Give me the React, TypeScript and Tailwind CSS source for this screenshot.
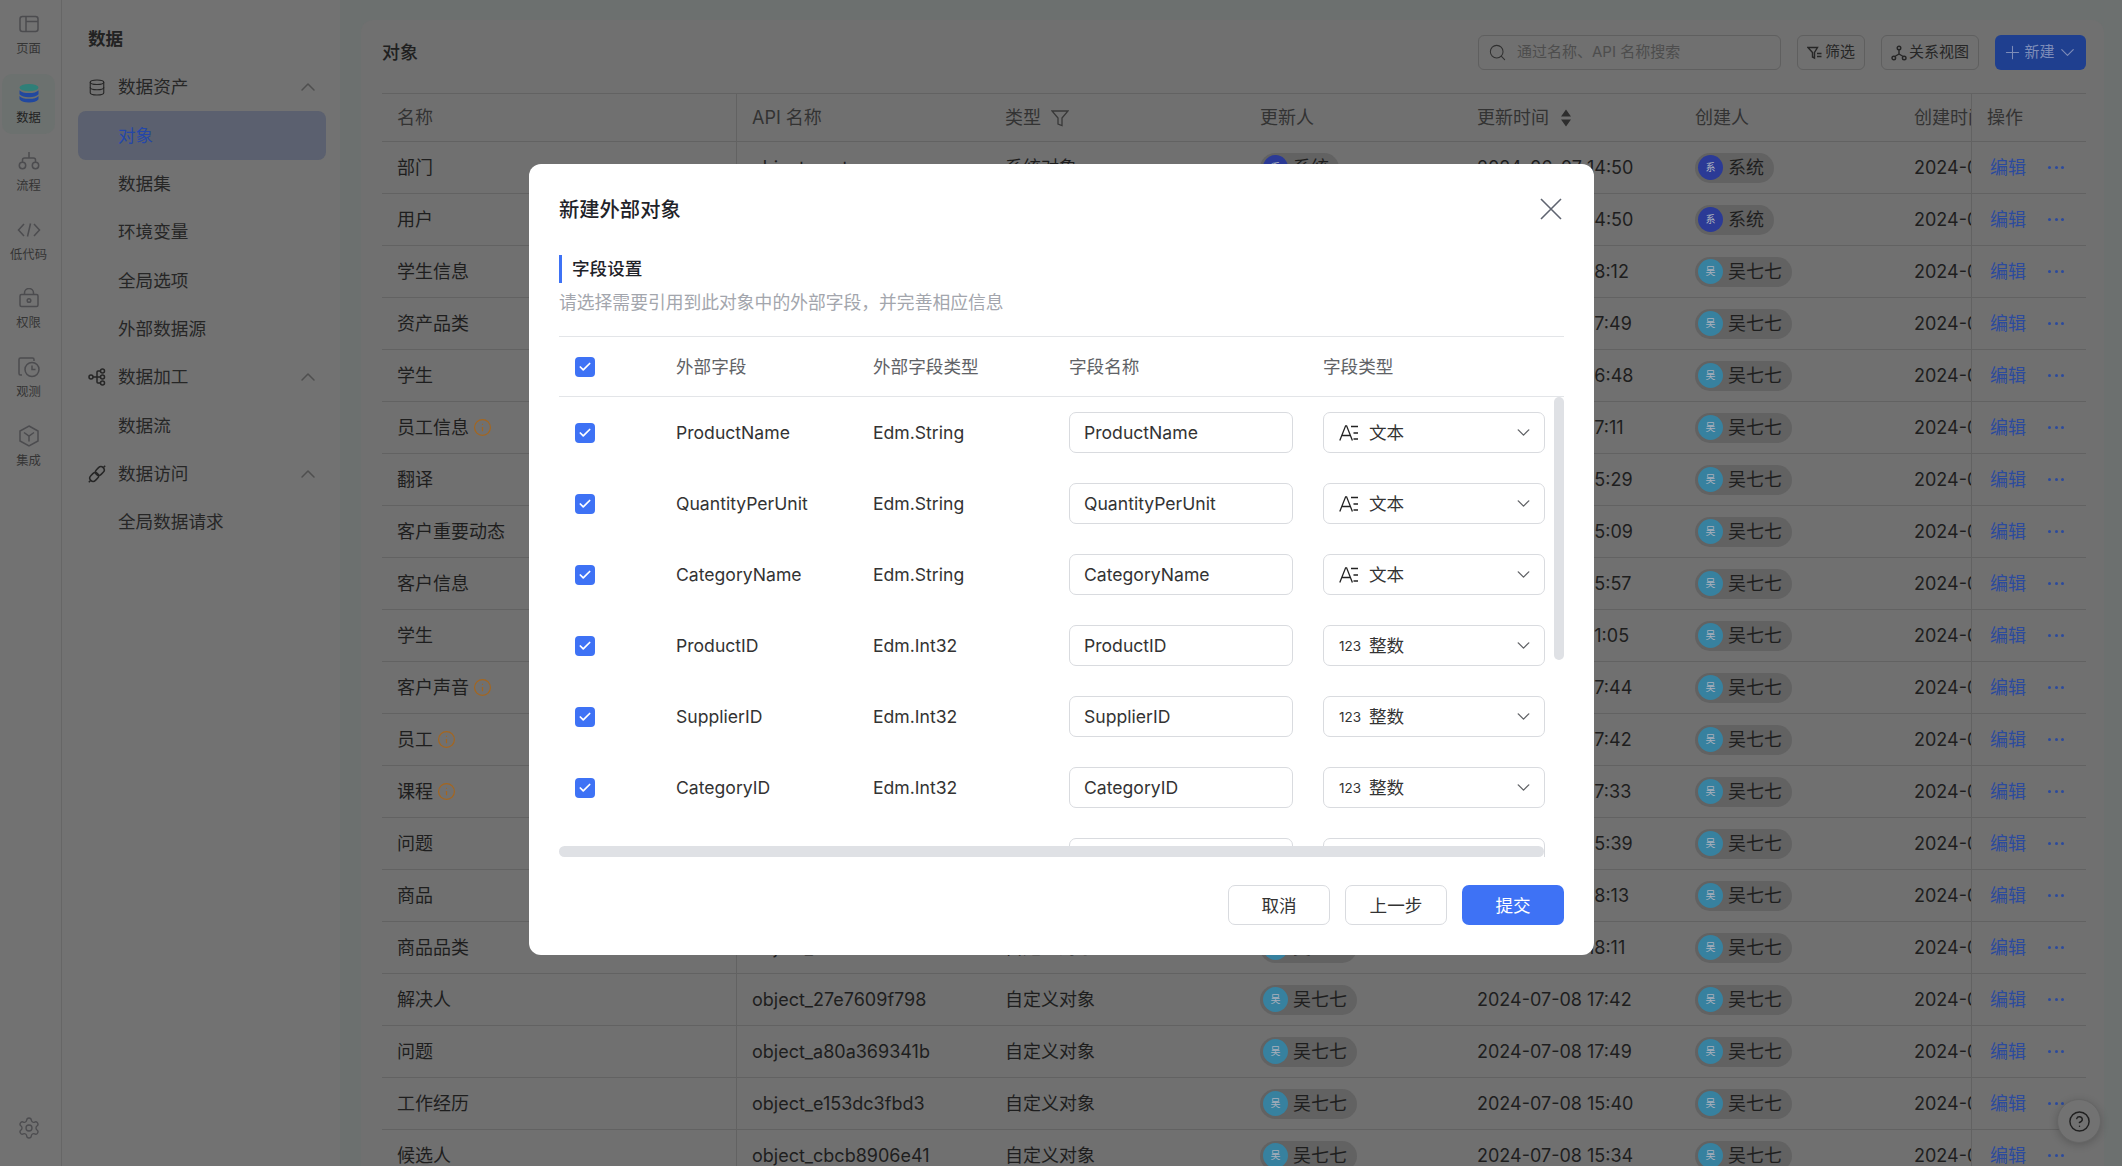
import React from "react";
import { ChevronDown, ChevronUp, Plus, Search, Settings, CircleHelp, Info, Check, Database } from "lucide-react";

const FONT = "font-['Inter','Noto_Sans_CJK_SC',sans-serif]";

function PageIcon() {
  return (
    <svg width="20" height="20" viewBox="0 0 20 20" fill="none" stroke="#4c4c4f" strokeWidth="1.5">
      <rect x="1" y="2.5" width="18" height="15" rx="2.5" />
      <path d="M7 2.5v15M7 7.5h12" />
    </svg>
  );
}
function DataIcon() {
  return (
    <svg width="20" height="20" viewBox="0 0 20 20">
      <ellipse cx="10" cy="4.6" rx="9.5" ry="3.6" fill="#2f7f78" />
      <path d="M.5 7.2c1.6 2 5 2.8 9.5 2.8s7.900-.8 9.500-2.800v4c-1.600 2-5 3-9.500 3s-7.900-1-9.500-3z" fill="#21489f" />
      <path d="M.5 13c1.600 2 5 2.800 9.500 2.800s7.900-.8 9.500-2.800v3.200c-1.600 2.200-5 3.300-9.500 3.300s-7.900-1.100-9.500-3.300z" fill="#21489f" />
    </svg>
  );
}
function FlowIcon() {
  return (
    <svg width="22" height="20" viewBox="0 0 22 20" fill="none" stroke="#4c4c4f" strokeWidth="1.500">
      <circle cx="4.500" cy="14.500" r="3.200" />
      <circle cx="17.500" cy="14.500" r="3.200" />
      <path d="M11 1v6M4.500 11.300V9a2 2 0 0 1 2-2h9a2 2 0 0 1 2 2v2.300" />
    </svg>
  );
}
function CodeIcon() {
  return (
    <svg width="24" height="18" viewBox="0 0 24 18" fill="none" stroke="#4c4c4f" strokeWidth="1.500">
      <path d="M7 3 1.500 9 7 15M17 3l5.500 6L17 15M13.500 2.500l-3 13" />
    </svg>
  );
}
function LockIcon() {
  return (
    <svg width="20" height="20" viewBox="0 0 20 20" fill="none" stroke="#4c4c4f" strokeWidth="1.500">
      <rect x="1" y="6.500" width="18" height="12" rx="1.500" />
      <path d="M5.500 6.500V5a4.500 4.500 0 0 1 9 0v1.500" />
      <circle cx="10" cy="12.500" r="1.800" />
    </svg>
  );
}
function WatchIcon() {
  return (
    <svg width="22" height="22" viewBox="0 0 22 22" fill="none" stroke="#4c4c4f" strokeWidth="1.500">
      <path d="M4 19H2.500A1.500 1.500 0 0 1 1 17.500v-14A1.500 1.500 0 0 1 2.500 2h12A1.500 1.500 0 0 1 16 3.500V5" />
      <circle cx="14" cy="13.500" r="7" />
      <path d="M14 9.500v4h3.500" />
    </svg>
  );
}
function HexIcon() {
  return (
    <svg width="20" height="22" viewBox="0 0 20 22" fill="none" stroke="#4c4c4f" strokeWidth="1.500">
      <path d="M10 1 19 6v10l-9 5-9-5V6z" />
      <path d="M5 7.500l5 3.500 5-3.500M10 11v5.500" />
    </svg>
  );
}
function ProcessIcon() {
  return (
    <svg width="18" height="18" viewBox="0 0 18 18" fill="none" stroke="#262626" strokeWidth="1.500">
      <circle cx="3" cy="9" r="2" />
      <circle cx="14.500" cy="3" r="2" />
      <circle cx="14.500" cy="9" r="2" />
      <circle cx="14.500" cy="15" r="2" />
      <path d="M5 9h7.500M12.500 3H10a1 1 0 0 0-1 1v10a1 1 0 0 0 1 1h2.500" />
    </svg>
  );
}
function AccessIcon() {
  return (
    <svg width="18" height="18" viewBox="0 0 18 18" fill="none" stroke="#262626" strokeWidth="1.500">
      <path d="M.8 17.200l2-2M15.200 2.800l2-2" />
      <rect x="1.400" y="8.700" width="9.500" height="6.600" rx="3.300" transform="rotate(-45 6.150 12)" />
      <rect x="7.100" y="2.700" width="9.500" height="6.600" rx="3.300" transform="rotate(-45 11.850 6)" />
    </svg>
  );
}
function FilterSmall() {
  return (
    <svg width="16" height="16" viewBox="0 0 16 16" fill="none" stroke="#262626" strokeWidth="1.400">
      <path d="M1 2.500h9.500L7.500 7.500V13l-2-1V7.500z" />
      <path d="M10 8.500h4.500M10 11.500h4.500" />
    </svg>
  );
}
function RelationIcon() {
  return (
    <svg width="16" height="16" viewBox="0 0 16 16" fill="none" stroke="#262626" strokeWidth="1.400">
      <circle cx="8" cy="3" r="1.800" />
      <circle cx="2.800" cy="13" r="1.800" />
      <circle cx="13.200" cy="13" r="1.800" />
      <path d="M8 4.800V9M8 9l-4.200 2.500M8 9l4.200 2.500" />
    </svg>
  );
}
function FunnelIcon() {
  return (
    <svg width="18" height="18" viewBox="0 0 18 18" fill="none" stroke="#383838" strokeWidth="1.300">
      <path d="M1 2h16l-6 7v7.500l-4-1.500V9z" />
    </svg>
  );
}
function SortIcon() {
  return (
    <svg width="12" height="18" viewBox="0 0 12 18" fill="#2e2e2e">
      <path d="M6 0.500 11 7.500H1zM6 17.500 1 10.500h10z" />
    </svg>
  );
}
function TextTypeIcon() {
  return (
    <svg width="20" height="18" viewBox="0 0 20 18" fill="none" stroke="#222222" strokeWidth="1.300">
      <path d="M.8 16.500 6.600 1.800h1L13.400 16.500M2.800 11.500h8.800" />
      <path d="M12 2.500h7M14.500 9H19M14.500 15H19" />
    </svg>
  );
}
function CloseIcon() {
  return (
    <svg width="22" height="22" viewBox="0 0 22 22" fill="none" stroke="#5f6470" strokeWidth="1.600">
      <path d="M1 1l20 20M21 1 1 21" />
    </svg>
  );
}

const railItems = [
  { label: "页面", icon: <PageIcon /> },
  { label: "数据", icon: <DataIcon />, active: true },
  { label: "流程", icon: <FlowIcon /> },
  { label: "低代码", icon: <CodeIcon /> },
  { label: "权限", icon: <LockIcon /> },
  { label: "观测", icon: <WatchIcon /> },
  { label: "集成", icon: <HexIcon /> },
];

function Rail() {
  return (
    <aside className="w-[62px] shrink-0 h-full border-r border-[#666666] bg-[#727272] flex flex-col pl-[2px] pt-[5px] pb-[26px]">
      <div className="flex flex-col gap-[8.600px]">
        {railItems.map((it) => (
          <div
            key={it.label}
            className={`w-[53px] h-[60px] rounded-[10px] flex flex-col items-center pt-[8px] gap-[6px] ${
              it.active ? "bg-[#6c716f] text-[#222222]" : "text-[#353535]"
            }`}
          >
            <div className="h-[22px] flex items-center justify-center">{it.icon}</div>
            <span className="text-[12.300px] leading-[16px] whitespace-nowrap">{it.label}</span>
          </div>
        ))}
      </div>
      <div className="mt-auto w-[53px] flex justify-center">
        <Settings size={24} strokeWidth={1.300} color="#4c4c4f" />
      </div>
    </aside>
  );
}

function NavGroup({ icon, label }: { icon: React.ReactNode; label: string }) {
  return (
    <div className="h-[48.300px] flex items-center pl-[10px] pr-[6px] text-[#262626]">
      <div className="w-[18px] h-[18px] flex items-center justify-center">{icon}</div>
      <span className="ml-[12px] flex-1 pt-[1px]">{label}</span>
      <ChevronUp size={24} strokeWidth={1.500} color="#4f4f4f" />
    </div>
  );
}
function NavItem({ label, active }: { label: string; active?: boolean }) {
  return (
    <div
      className={`h-[48.300px] flex items-center pl-[40px] pt-[1px] rounded-[8px] ${
        active ? "bg-[#5b606f] text-[#2547a8]" : "text-[#262626]"
      }`}
    >
      {label}
    </div>
  );
}

function SubNav() {
  return (
    <aside className="w-[278px] shrink-0 h-full bg-[#727272] pl-[16px] pr-[14px] text-[17.600px]">
      <div className="pt-[25px] pl-[10px] h-[63px] font-semibold text-[#222222] leading-[28px]">数据</div>
      <NavGroup icon={<Database size={23} strokeWidth={1.500} color="#262626" />} label="数据资产" />
      <NavItem label="对象" active />
      <NavItem label="数据集" />
      <NavItem label="环境变量" />
      <NavItem label="全局选项" />
      <NavItem label="外部数据源" />
      <NavGroup icon={<ProcessIcon />} label="数据加工" />
      <NavItem label="数据流" />
      <NavGroup icon={<AccessIcon />} label="数据访问" />
      <NavItem label="全局数据请求" />
    </aside>
  );
}

type Row = { name: string; warn?: boolean; api: string; type: string; up: string; time: string; by: string };

const sys = { up: "系统", by: "系统" };
const wu = { up: "吴七七", by: "吴七七" };
const rows: Row[] = [
  { name: "部门", api: "object_system_a", type: "系统对象", ...sys, time: "2024-06-07 14:50" },
  { name: "用户", api: "object_system_b", type: "系统对象", ...sys, time: "2024-06-07 14:50" },
  { name: "学生信息", api: "object_a1", type: "自定义对象", ...wu, time: "2024-07-08 18:12" },
  { name: "资产品类", api: "object_a2", type: "自定义对象", ...wu, time: "2024-07-08 17:49" },
  { name: "学生", api: "object_a3", type: "自定义对象", ...wu, time: "2024-07-08 16:48" },
  { name: "员工信息", warn: true, api: "object_a4", type: "自定义对象", ...wu, time: "2024-07-08 17:11" },
  { name: "翻译", api: "object_a5", type: "自定义对象", ...wu, time: "2024-07-08 15:29" },
  { name: "客户重要动态", api: "object_a6", type: "自定义对象", ...wu, time: "2024-07-08 15:09" },
  { name: "客户信息", api: "object_a7", type: "自定义对象", ...wu, time: "2024-07-08 15:57" },
  { name: "学生", api: "object_a8", type: "自定义对象", ...wu, time: "2024-07-08 11:05" },
  { name: "客户声音", warn: true, api: "object_a9", type: "自定义对象", ...wu, time: "2024-07-08 17:44" },
  { name: "员工", warn: true, api: "object_b1", type: "自定义对象", ...wu, time: "2024-07-08 17:42" },
  { name: "课程", warn: true, api: "object_b2", type: "自定义对象", ...wu, time: "2024-07-08 17:33" },
  { name: "问题", api: "object_b3", type: "自定义对象", ...wu, time: "2024-07-08 15:39" },
  { name: "商品", api: "object_b4", type: "自定义对象", ...wu, time: "2024-07-08 18:13" },
  { name: "商品品类", api: "object_b5", type: "自定义对象", ...wu, time: "2024-07-08 18:11" },
  { name: "解决人", api: "object_27e7609f798", type: "自定义对象", ...wu, time: "2024-07-08 17:42" },
  { name: "问题", api: "object_a80a369341b", type: "自定义对象", ...wu, time: "2024-07-08 17:49" },
  { name: "工作经历", api: "object_e153dc3fbd3", type: "自定义对象", ...wu, time: "2024-07-08 15:40" },
  { name: "候选人", api: "object_cbcb8906e41", type: "自定义对象", ...wu, time: "2024-07-08 15:34" },
];

function Person({ name }: { name: string }) {
  const isSys = name === "系统";
  return (
    <div className="inline-flex items-center h-[30px] rounded-full bg-[#626262] pl-[3px] pr-[10px] gap-[5px]">
      <span
        className={`w-[25px] h-[25px] rounded-full flex items-center justify-center text-[10px] text-[#aab0bc] ${
          isSys ? "bg-[#2b3a96]" : "bg-[#37819f]"
        }`}
      >
        {name[0]}
      </span>
      <span className="text-[#1e1e1e]">{name}</span>
    </div>
  );
}

const cell = "h-full flex items-center shrink-0 pl-[15px] overflow-hidden whitespace-nowrap";

function Table() {
  return (
    <div className="w-[1704px] text-[18px]">
      <div className="h-[49px] flex border-y border-[#626262] text-[#333333]">
        <div className={`${cell} w-[355px] border-r border-[#626262]`}>名称</div>
        <div className={`${cell} w-[253px]`}>API 名称</div>
        <div className={`${cell} w-[255px] gap-[10px]`}>
          类型
          <FunnelIcon />
        </div>
        <div className={`${cell} w-[217px]`}>更新人</div>
        <div className={`${cell} w-[218px] gap-[11px]`}>
          更新时间
          <SortIcon />
        </div>
        <div className={`${cell} w-[219px]`}>创建人</div>
        <div className={`${cell} w-[72px]`}>创建时间</div>
        <div className={`${cell} w-[115px] border-l border-[#626262] pl-[13px]`}>操作</div>
      </div>
      {rows.map((r, i) => (
        <div key={i} className="h-[52px] flex border-b border-[#626262] text-[#1e1e1e]">
          <div className={`${cell} w-[355px] border-r border-[#626262] gap-[4px]`}>
            {r.name}
            {r.warn && <Info size={19} strokeWidth={1.500} color="#a5661e" />}
          </div>
          <div className={`${cell} w-[253px]`}>{r.api}</div>
          <div className={`${cell} w-[255px]`}>{r.type}</div>
          <div className={`${cell} w-[217px]`}>
            <Person name={r.up} />
          </div>
          <div className={`${cell} w-[218px]`}>{r.time}</div>
          <div className={`${cell} w-[219px]`}>
            <Person name={r.by} />
          </div>
          <div className={`${cell} w-[72px]`}>{r.time}</div>
          <div className={`${cell} w-[115px] border-l border-[#626262] pl-[18px] text-[#2b4a9e]`}>
            <span className="w-[58px]">编辑</span>
            <span className="flex gap-[3.500px]">
              <i className="block w-[3px] h-[3px] rounded-full bg-[#2b4a9e]" />
              <i className="block w-[3px] h-[3px] rounded-full bg-[#2b4a9e]" />
              <i className="block w-[3px] h-[3px] rounded-full bg-[#2b4a9e]" />
            </span>
          </div>
        </div>
      ))}
    </div>
  );
}

function Main() {
  return (
    <main className="flex-1 min-w-0 h-full bg-[#6c706f] pl-[21px] pr-[18px] pt-[20px]">
      <div className="h-full bg-[#707070] rounded-t-[12px] pl-[21px] pr-[18px] overflow-hidden">
        <div className="h-[73px] flex items-center pb-[8px]">
          <h1 className="text-[18px] font-medium text-[#202020]">对象</h1>
          <div className="ml-auto flex items-center gap-[16px] text-[15px] text-[#262626]">
            <div className="w-[303px] h-[35px] border border-[#5f5f5f] rounded-[6px] flex items-center pl-[9px] gap-[10px] text-[#4d4d4d]">
              <Search size={19} strokeWidth={1.300} color="#303030" />
              <span className="text-[15px]">通过名称、API 名称搜索</span>
            </div>
            <div className="w-[68px] h-[35px] border border-[#5f5f5f] rounded-[6px] flex items-center justify-center gap-[2px]">
              <FilterSmall />
              筛选
            </div>
            <div className="w-[98px] h-[35px] border border-[#5f5f5f] rounded-[6px] flex items-center justify-center gap-[2px]">
              <RelationIcon />
              关系视图
            </div>
            <div className="w-[91px] h-[35px] rounded-[6px] bg-[#1f3f8f] text-[#7d8cb8] flex items-center justify-center">
              <Plus size={21} strokeWidth={1.200} />
              <span className="ml-[1px] mr-[1px]">新建</span>
              <ChevronDown size={23} strokeWidth={1.200} />
            </div>
          </div>
        </div>
        <Table />
      </div>
    </main>
  );
}

const fields = [
  { name: "ProductName", ty: "Edm.String", text: true },
  { name: "QuantityPerUnit", ty: "Edm.String", text: true },
  { name: "CategoryName", ty: "Edm.String", text: true },
  { name: "ProductID", ty: "Edm.Int32", text: false },
  { name: "SupplierID", ty: "Edm.Int32", text: false },
  { name: "CategoryID", ty: "Edm.Int32", text: false },
  { name: "UnitPrice", ty: "Edm.Decimal", text: false },
];

function Box() {
  return (
    <span className="w-[20px] h-[20px] rounded-[4px] bg-[#3e72f5] flex items-center justify-center">
      <Check size={14} strokeWidth={3} color="#ffffff" />
    </span>
  );
}

function Modal() {
  return (
    <div className="absolute left-[529px] top-[164px] w-[1065px] h-[791px] bg-white rounded-[12px] px-[30px] text-[17.600px] text-[#333333]">
      <div className="h-[91px] flex items-center justify-between">
        <h2 className="text-[20.300px] font-medium text-[#1f2329] pt-[1px]">新建外部对象</h2>
        <div className="mr-[2px] -mt-[1px]">
          <CloseIcon />
        </div>
      </div>
      <div className="h-[28px] border-l-[3px] border-[#3e72f5] pl-[10px] flex items-center text-[17.600px] font-medium text-[#1f2329] pt-[1px]">
        字段设置
      </div>
      <p className="h-[38px] leading-[38px] text-[17.800px] text-[#a3a6ad] pt-[1px]">请选择需要引用到此对象中的外部字段，并完善相应信息</p>
      <div className="mt-[15px] w-[1005px]">
        <div className="h-[61px] flex items-center border-y border-[#e3e5e8] text-[#606266]">
          <div className="w-[117px] pl-[16px]">
            <Box />
          </div>
          <div className="w-[197px] pt-[2px]">外部字段</div>
          <div className="w-[196px] pt-[2px]">外部字段类型</div>
          <div className="w-[254px] pt-[2px]">字段名称</div>
          <div className="pt-[2px]">字段类型</div>
        </div>
        <div className="relative h-[460px] overflow-hidden">
          {fields.map((f) => (
            <div key={f.name} className="h-[71px] flex items-center">
              <div className="w-[117px] pl-[16px]">
                <Box />
              </div>
              <div className="w-[197px] pt-[2px]">{f.name}</div>
              <div className="w-[196px] pt-[2px]">{f.ty}</div>
              <div className="w-[254px]">
                <div className="w-[224px] h-[41px] border border-[#d9dbdf] rounded-[7px] flex items-center pl-[14px] pt-[2px]">
                  {f.name}
                </div>
              </div>
              <div className="w-[222px] h-[41px] border border-[#d9dbdf] rounded-[7px] flex items-center pl-[15px] pr-[10px]">
                <span className="w-[30px] flex items-center">
                  {f.text ? <TextTypeIcon /> : <span className="text-[13.500px] leading-none pt-[2px]">123</span>}
                </span>
                <span className="flex-1 pt-[2px]">{f.text ? "文本" : "整数"}</span>
                <ChevronDown size={21} strokeWidth={1.600} color="#606266" />
              </div>
            </div>
          ))}
          <div className="absolute right-0 top-0 w-[10px] h-[263px] rounded-full bg-[#dfe1e5]" />
          <div className="absolute left-0 bottom-0 w-[985px] h-[11px] rounded-full bg-[#dfe1e5]" />
        </div>
      </div>
      <div className="mt-[28px] flex justify-end gap-[15px]">
        <button className="w-[102px] h-[40px] rounded-[7px] border border-[#d9dbdf] bg-white pt-[2px]">取消</button>
        <button className="w-[102px] h-[40px] rounded-[7px] border border-[#d9dbdf] bg-white pt-[2px]">上一步</button>
        <button className="w-[102px] h-[40px] rounded-[7px] bg-[#3e72f5] text-white pt-[2px]">提交</button>
      </div>
    </div>
  );
}

export default function App() {
  return (
    <div className={`relative w-[2122px] h-[1166px] overflow-hidden flex ${FONT}`}>
      <Rail />
      <SubNav />
      <Main />
      <Modal />
      <div className="absolute left-[2057px] top-[1099px] w-[44px] h-[44px] rounded-full bg-[#727272] shadow-[0_2px_8px_rgba(0,0,0,0.2)] border border-[#666666] flex items-center justify-center">
        <CircleHelp size={23} strokeWidth={1.500} color="#202020" />
      </div>
    </div>
  );
}
